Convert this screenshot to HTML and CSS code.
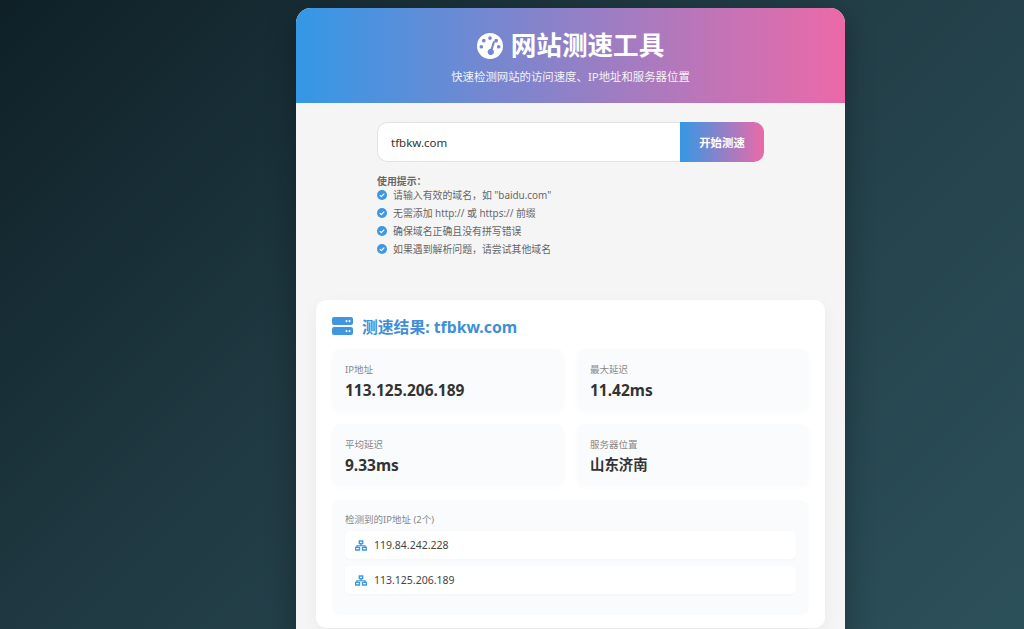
FILE: index.html
```html
<!DOCTYPE html>
<html lang="zh-CN">
<head>
    <meta charset="UTF-8">
    <meta name="viewport" content="width=device-width, initial-scale=1.0">
    <title>网站测速工具</title>
    <link rel="stylesheet" href="styles.css">
</head>
<body>
    <div class="container">
        <!-- Header -->
        <div class="header">
            <h1 class="header-title">
                <svg class="title-icon" viewBox="0 0 24 24">
                    <path fill-rule="evenodd" fill="#fff" d="M12 0a12 12 0 1 1 0 24 12 12 0 0 1 0-24zM12 3a1.7 1.7 0 1 0 0 3.4A1.7 1.7 0 0 0 12 3zM6.3 5.4a1.7 1.7 0 1 0 0 3.4 1.7 1.7 0 0 0 0-3.4zM4 11a1.7 1.7 0 1 0 0 3.4A1.7 1.7 0 0 0 4 11zM20 11a1.7 1.7 0 1 0 0 3.4 1.7 1.7 0 0 0 0-3.4zM17.7 5.4a1.7 1.7 0 1 0 0 3.4 1.7 1.7 0 0 0 0-3.4zM15.9 7.4c-.5-.2-1 .1-1.2.6l-2.1 6.6a2.9 2.9 0 1 0 1.9.6l2-6.6c.2-.5-.1-1-.6-1.2z"/>
                </svg>
                <span>网站测速工具</span>
            </h1>
            <p class="header-subtitle">快速检测网站的访问速度、IP地址和服务器位置</p>
        </div>

        <!-- Content -->
        <div class="content">
            <div class="search-area">
                <div class="search-form">
                    <input class="search-input" type="text" value="tfbkw.com">
                    <button class="search-button">开始测速</button>
                </div>
                <div class="tips">
                    <div class="tips-title">使用提示：</div>
                    <ul class="tips-list">
                        <li class="tips-item">
                            <svg class="check-icon" viewBox="0 0 16 16"><circle cx="8" cy="8" r="8" fill="#3f96e2"/><path d="M4.4 8.3l2.5 2.4 4.7-4.9" fill="none" stroke="#fff" stroke-width="1.9"/></svg>
                            <span>请输入有效的域名，如 "baidu.com"</span>
                        </li>
                        <li class="tips-item">
                            <svg class="check-icon" viewBox="0 0 16 16"><circle cx="8" cy="8" r="8" fill="#3f96e2"/><path d="M4.4 8.3l2.5 2.4 4.7-4.9" fill="none" stroke="#fff" stroke-width="1.9"/></svg>
                            <span>无需添加 http:// 或 https:// 前缀</span>
                        </li>
                        <li class="tips-item">
                            <svg class="check-icon" viewBox="0 0 16 16"><circle cx="8" cy="8" r="8" fill="#3f96e2"/><path d="M4.4 8.3l2.5 2.4 4.7-4.9" fill="none" stroke="#fff" stroke-width="1.9"/></svg>
                            <span>确保域名正确且没有拼写错误</span>
                        </li>
                        <li class="tips-item">
                            <svg class="check-icon" viewBox="0 0 16 16"><circle cx="8" cy="8" r="8" fill="#3f96e2"/><path d="M4.4 8.3l2.5 2.4 4.7-4.9" fill="none" stroke="#fff" stroke-width="1.9"/></svg>
                            <span>如果遇到解析问题，请尝试其他域名</span>
                        </li>
                    </ul>
                </div>
            </div>

            <!-- Results -->
            <div class="result-card">
                <div class="result-title">
                    <svg class="server-icon" viewBox="0 0 21 18">
                        <path fill-rule="evenodd" fill="#3f96e2" d="M2 0h17a2 2 0 0 1 2 2v4a2 2 0 0 1-2 2H2a2 2 0 0 1-2-2V2a2 2 0 0 1 2-2zM15 3.2a1 1 0 1 0 0 1.8 1 1 0 0 0 0-1.8zM18 3.2a1 1 0 1 0 0 1.8 1 1 0 0 0 0-1.8zM2 10h17a2 2 0 0 1 2 2v4a2 2 0 0 1-2 2H2a2 2 0 0 1-2-2v-4a2 2 0 0 1 2-2zM15 13.2a1 1 0 1 0 0 1.8 1 1 0 0 0 0-1.8zM18 13.2a1 1 0 1 0 0 1.8 1 1 0 0 0 0-1.8z"/>
                    </svg>
                    <span>测速结果: tfbkw.com</span>
                </div>

                <div class="stats-grid">
                    <div class="stat-card">
                        <div class="stat-label">IP地址</div>
                        <div class="stat-value">113.125.206.189</div>
                    </div>
                    <div class="stat-card">
                        <div class="stat-label">最大延迟</div>
                        <div class="stat-value">11.42ms</div>
                    </div>
                    <div class="stat-card">
                        <div class="stat-label">平均延迟</div>
                        <div class="stat-value">9.33ms</div>
                    </div>
                    <div class="stat-card">
                        <div class="stat-label">服务器位置</div>
                        <div class="stat-value stat-value-cn">山东济南</div>
                    </div>
                </div>

                <div class="ip-panel">
                    <div class="stat-label">检测到的IP地址 (2个)</div>
                    <div class="ip-row">
                        <svg class="network-icon" viewBox="0 0 14 12"><path fill-rule="evenodd" fill="#3f96e2" d="M4.2 0h5.6v4.6H7.8v1h4.7v2H14V12H8V7.4h2.9v-.5H3.1v.5H6V12H0V7.4h1.5V5.6h4.7v-1h-2zM5.8 1.5v1.6h2.4V1.5zM1.5 8.9v1.6h3V8.9zM9.5 8.9v1.6h3V8.9z"/></svg>
                        <span>119.84.242.228</span>
                    </div>
                    <div class="ip-row">
                        <svg class="network-icon" viewBox="0 0 14 12"><path fill-rule="evenodd" fill="#3f96e2" d="M4.2 0h5.6v4.6H7.8v1h4.7v2H14V12H8V7.4h2.9v-.5H3.1v.5H6V12H0V7.4h1.5V5.6h4.7v-1h-2zM5.8 1.5v1.6h2.4V1.5zM1.5 8.9v1.6h3V8.9zM9.5 8.9v1.6h3V8.9z"/></svg>
                        <span>113.125.206.189</span>
                    </div>
                </div>
            </div>
        </div>
    </div>
</body>
</html>
```

FILE: styles.css
```css
/* Reset and base styles */
* {
    margin: 0;
    padding: 0;
    box-sizing: border-box;
    font-family: "Noto Sans", "Noto Sans CJK SC", sans-serif;
}

html,
body {
    height: 100%;
    overflow: hidden;
}

body {
    background: linear-gradient(135deg, #0f2027, #203a43 42%, #2c505a);
    color: #333333;
    padding-top: 8px;
}

.container {
    width: 549px;
    margin-left: 296px;
    background-color: #f5f5f6;
    border-radius: 15px;
    box-shadow: 0 10px 30px rgba(0, 0, 0, 0.3);
    overflow: hidden;
}

/* Header styles */
.header {
    height: 95px;
    padding-top: 19px;
    text-align: center;
    color: #ffffff;
    background: linear-gradient(90deg, #3498e6, #ec69a8);
}

.header-title {
    display: flex;
    align-items: center;
    justify-content: center;
    gap: 8px;
    font-size: 25.6px;
    line-height: 38px;
    font-weight: 700;
}

.title-icon {
    width: 26px;
    height: 26px;
}

.header-subtitle {
    margin-top: 3px;
    font-size: 11.4px;
    line-height: 18px;
    opacity: 0.9;
}

/* Search form */
.content {
    padding: 19px 20px 20px;
}

.search-area {
    width: 387px;
    margin: 0 auto;
}

.search-form {
    display: flex;
    height: 40px;
}

.search-input {
    flex: 1;
    min-width: 0;
    padding: 0 13px;
    border: 1px solid #dfe3e6;
    border-right: none;
    border-radius: 10px 0 0 10px;
    background-color: #ffffff;
    color: #333333;
    font-size: 11.5px;
}

.search-button {
    width: 84px;
    border: none;
    border-radius: 0 10px 10px 0;
    background: linear-gradient(90deg, #3498e6, #ec69a8);
    color: #ffffff;
    font-size: 11.4px;
    font-weight: 700;
}

/* Tips */
.tips {
    margin-top: 14px;
    color: #666666;
    font-size: 9.9px;
}

.tips-title {
    line-height: 10px;
    font-weight: 700;
}

.tips-list {
    list-style: none;
}

.tips-item {
    display: flex;
    align-items: center;
    gap: 6px;
    height: 18px;
}

.check-icon {
    width: 10px;
    height: 10px;
    flex-shrink: 0;
}

/* Results */
.result-card {
    margin-top: 42px;
    padding: 15px 16px 13px;
    background-color: #ffffff;
    border-radius: 10px;
    box-shadow: 0 5px 15px rgba(0, 0, 0, 0.05);
}

.result-title {
    display: flex;
    align-items: center;
    gap: 9px;
    color: #3f8fd8;
    font-size: 15.8px;
    line-height: 24px;
    font-weight: 700;
}

.server-icon {
    width: 21px;
    height: 18px;
    margin-top: -2px;
}

.stats-grid {
    display: grid;
    grid-template-columns: 1fr 1fr;
    gap: 13px;
    margin-top: 10px;
}

.stat-card {
    height: 62px;
    padding: 14px 13px 0;
    background-color: #fafbfc;
    border-radius: 8px;
    box-shadow: 0 2px 6px rgba(0, 0, 0, 0.02);
}

.stat-label {
    color: #888888;
    font-size: 9.5px;
    line-height: 14px;
}

.stat-value {
    margin-top: 1px;
    color: #333333;
    font-size: 15.5px;
    line-height: 24px;
    font-weight: 700;
}

.stat-value-cn {
    font-size: 14.4px;
}

/* IP list */
.ip-panel {
    margin-top: 14px;
    padding: 13px 13px 14px;
    background-color: #fafbfc;
    border-radius: 8px;
}

.ip-row {
    display: flex;
    align-items: center;
    gap: 7px;
    height: 28px;
    margin-top: 4px;
    margin-bottom: 7px;
    padding-left: 10px;
    background-color: #ffffff;
    border-radius: 5px;
    box-shadow: 0 1px 3px rgba(0, 0, 0, 0.03);
    color: #444444;
    font-size: 10.5px;
}

.network-icon {
    width: 12px;
    height: 11px;
}
```
